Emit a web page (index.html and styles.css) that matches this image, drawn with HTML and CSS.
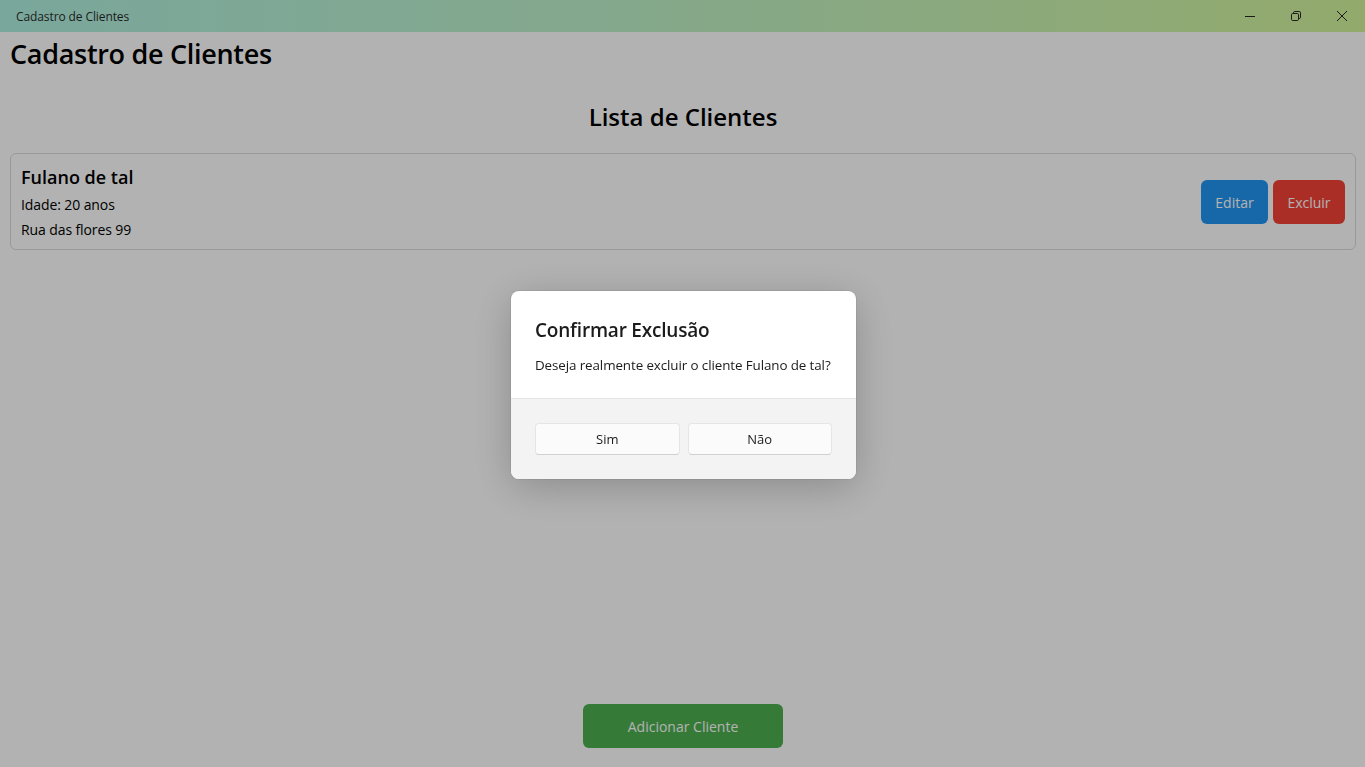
FILE: index.html
```html
<!DOCTYPE html>
<html lang="pt">
<head>
<meta charset="utf-8">
<title>Cadastro de Clientes</title>
<link rel="stylesheet" href="styles.css">
</head>
<body>
<header class="titlebar">
  <span class="titlebar-text">Cadastro de Clientes</span>
  <div class="win-controls">
    <button class="win-btn" aria-label="Minimizar">
      <svg width="10" height="10" viewBox="0 0 10 10"><path d="M0 5.5h10" stroke="#1b1b1b" stroke-width="1" fill="none"/></svg>
    </button>
    <button class="win-btn" aria-label="Restaurar">
      <svg width="10" height="10" viewBox="0 0 10 10"><path d="M2.5 2.5V1.8A1.3 1.3 0 0 1 3.8 0.5H8.2A1.3 1.3 0 0 1 9.5 1.8V6.2A1.3 1.3 0 0 1 8.2 7.5H7.5" stroke="#1b1b1b" stroke-width="1" fill="none"/><rect x="0.5" y="2.5" width="7" height="7" rx="1.2" stroke="#1b1b1b" stroke-width="1" fill="none"/></svg>
    </button>
    <button class="win-btn" aria-label="Fechar">
      <svg width="10" height="10" viewBox="0 0 10 10"><path d="M0 0L10 10M10 0L0 10" stroke="#1b1b1b" stroke-width="1" fill="none"/></svg>
    </button>
  </div>
</header>

<main class="app">
  <h1 class="app-title">Cadastro de Clientes</h1>
  <h2 class="list-title">Lista de Clientes</h2>
  <section class="list">
    <article class="client-card">
      <div class="client-info">
        <h3 class="client-name">Fulano de tal</h3>
        <p class="client-line">Idade: 20 anos</p>
        <p class="client-line">Rua das flores 99</p>
      </div>
      <div class="client-actions">
        <button class="btn btn-edit">Editar</button>
        <button class="btn btn-delete">Excluir</button>
      </div>
    </article>
  </section>
  <div class="footer">
    <button class="btn btn-add">Adicionar Cliente</button>
  </div>
</main>

<div class="overlay">
  <div class="dialog" role="dialog">
    <div class="dialog-body">
      <h2 class="dialog-title">Confirmar Exclusão</h2>
      <p class="dialog-text">Deseja realmente excluir o cliente Fulano de tal?</p>
    </div>
    <div class="dialog-footer">
      <button class="dlg-btn">Sim</button>
      <button class="dlg-btn">Não</button>
    </div>
  </div>
</div>
</body>
</html>
```

FILE: styles.css
```css
* { box-sizing: border-box; }

html, body {
  margin: 0;
  padding: 0;
  height: 100%;
}

body {
  font-family: "Open Sans", "Noto Sans", sans-serif;
  background: #ffffff;
  color: #000;
  overflow: hidden;
}

.titlebar {
  position: relative;
  z-index: 20;
  height: 32px;
  display: flex;
  align-items: center;
  justify-content: space-between;
  background: linear-gradient(90deg, #7aa79c 0%, #84a88c 45%, #93aa6c 100%);
}

.titlebar-text {
  padding-left: 16px;
  font-size: 12px;
  color: #1b1b1b;
  letter-spacing: -0.1px;
}

.win-controls {
  display: flex;
  height: 32px;
}

.win-btn {
  width: 46px;
  height: 32px;
  border: 0;
  background: transparent;
  display: flex;
  align-items: center;
  justify-content: center;
  padding: 0;
}

.app {
  height: calc(100% - 32px);
  display: flex;
  flex-direction: column;
  padding: 0 9px 0 10px;
}

.app-title {
  margin: 4px 0 0;
  font-size: 27px;
  font-weight: 600;
  line-height: 36px;
  letter-spacing: -0.3px;
}

.list-title {
  margin: 29px 0 0;
  text-align: center;
  font-size: 24px;
  font-weight: 600;
  line-height: 32px;
  letter-spacing: 0;
}

.list {
  flex: 1;
  margin-top: 20px;
}

.client-card {
  display: flex;
  align-items: center;
  justify-content: space-between;
  border: 1px solid #dcdcdc;
  border-radius: 6px;
  padding: 0 10px;
  height: 97px;
}

.client-info {
  padding-top: 2px;
}

.client-name {
  margin: 0 0 2px;
  font-size: 18px;
  font-weight: 600;
  line-height: 26px;
  letter-spacing: 0;
}

.client-line {
  margin: 0;
  font-size: 14px;
  line-height: 25px;
  letter-spacing: -0.1px;
}

.client-actions {
  display: flex;
  gap: 5px;
  margin-top: 1px;
}

.btn {
  font-family: inherit;
  border: 0;
  border-radius: 6px;
  color: #fff;
  font-size: 14px;
  height: 44px;
  cursor: pointer;
}

.btn-edit { background: #2196f3; width: 67px; }
.btn-delete { background: #f44336; width: 72px; }

.footer {
  display: flex;
  justify-content: center;
  padding-bottom: 19px;
}

.btn-add {
  background: #4caf50;
  width: 200px;
  font-size: 14px;
}

.overlay {
  position: fixed;
  inset: 0;
  z-index: 10;
  background: rgba(0, 0, 0, 0.3);
  display: flex;
  align-items: center;
  justify-content: center;
}

.dialog {
  width: 345px;
  margin: 2px 0 0 2px;
  background: #fff;
  border-radius: 8px;
  overflow: hidden;
  box-shadow: 0 8px 40px rgba(0, 0, 0, 0.22), 0 0 0 1px rgba(0, 0, 0, 0.06);
}

.dialog-body {
  padding: 25px 24px 23px;
}

.dialog-title {
  margin: 0;
  font-size: 19px;
  font-weight: 600;
  line-height: 28px;
  color: #1b1b1b;
  letter-spacing: -0.2px;
}

.dialog-text {
  margin: 11px 0 0;
  font-size: 13.4px;
  line-height: 20px;
  color: #1b1b1b;
  letter-spacing: -0.1px;
}

.dialog-footer {
  display: flex;
  gap: 8px;
  padding: 24px;
  background: #f3f3f3;
  border-top: 1px solid #e5e5e5;
}

.dlg-btn {
  flex: 1;
  height: 32px;
  font-family: inherit;
  font-size: 13px;
  color: #1b1b1b;
  background: #fbfbfb;
  border: 1px solid #e5e5e5;
  border-bottom-color: #d0d0d0;
  border-radius: 4px;
}
```
